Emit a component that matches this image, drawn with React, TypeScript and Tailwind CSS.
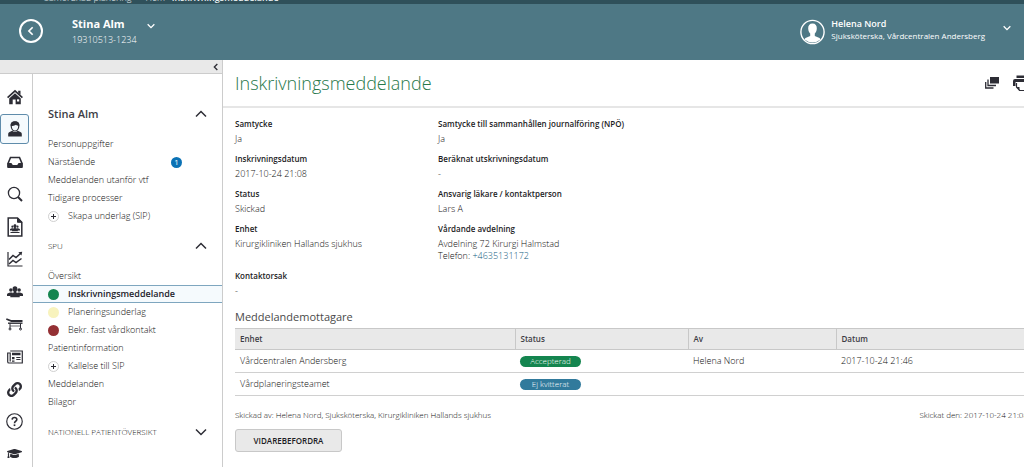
import type { ReactNode } from "react";
import { FaGraduationCap, FaLink } from "react-icons/fa";

const dark = "#2d2d35";

function Glyph({ children, size = 16 }: { children: ReactNode; size?: number }) {
  return (
    <svg width={size} height={size} viewBox="0 0 16 16" fill="none" stroke={dark} strokeWidth="1.2" aria-hidden="true">
      {children}
    </svg>
  );
}

function Chevron({ dir, size, color, width = 2 }: { dir: "up" | "down" | "left"; size: number; color: string; width?: number }) {
  const d = { up: "M1 8.500 6 3.500l5 5", down: "M1 3.500 6 8.500l5-5", left: "M8 1.500 3.500 6 8 10.500" }[dir];
  return (
    <svg width={size} height={size} viewBox="0 0 12 12" fill="none" stroke={color} strokeWidth={width} aria-hidden="true">
      <path d={d} />
    </svg>
  );
}

function People() {
  return (
    <g fill={dark} stroke="none">
      <circle cx="3.900" cy="6" r="1.800" />
      <circle cx="12.100" cy="6" r="1.800" />
      <path d="M0 12V10.500Q0 9.600 1 9.300L3 8.500H5L6 9 3.500 12ZM16 12V10.500Q16 9.600 15 9.300L13 8.500H11L10 9 12.500 12Z" />
      <path d="M8 2.200C9.600 2.200 10.500 3.300 10.400 4.900 10.300 6.200 9.800 7 9.300 7.500V8.600L12 9.900Q12.700 10.300 12.700 11.200V13.200H3.300V11.200Q3.300 10.300 4 9.900L6.700 8.600V7.500C6.200 7 5.700 6.200 5.600 4.900 5.500 3.300 6.400 2.200 8 2.200Z" />
    </g>
  );
}

const railItems: { label: string; icon: ReactNode; active?: boolean }[] = [
  {
    label: "Hem",
    icon: (
      <Glyph>
        <path d="M.6 8.600 8 1.800l7.400 6.800" strokeWidth="1.700" />
        <path fill={dark} stroke="none" d="M11.200 1.700h2.300v4l-2.300-2ZM8 4.300l5.800 5.200v5.700H8.600V10.500H5.700v4.700H2.200V9.500Z" />
        <path fill="#fff" stroke="none" d="M10 10.300h2.200v2.200H10z" />
      </Glyph>
    ),
  },
  {
    label: "Patient",
    active: true,
    icon: (
      <Glyph>
        <path d="M4.200 5C4 2.300 5.600.9 8 .9S12 2.300 11.800 5C11.700 8 9.900 10 8 10S4.300 8 4.200 5Z" />
        <path fill={dark} stroke="none" d="M3.800 5C3.200 1.800 5 .4 8 .4s4.800 1.400 4.200 4.600C10.500 4.800 9.500 4.200 9 3.700 8 4.600 5.500 5 3.800 5ZM1.200 15.600V12.800Q1.200 11.500 2.600 11L5.200 9.800Q8 12.200 10.800 9.800L13.400 11Q14.800 11.500 14.800 12.800V15.600Z" />
      </Glyph>
    ),
  },
  {
    label: "Inkorg",
    icon: (
      <Glyph>
        <path d="M1 9.500 3.500 3.500H12.500L15 9.500V12.500Q15 13.300 14.200 13.300H1.800Q1 13.300 1 12.500Z" strokeWidth="1.600" />
        <path fill={dark} stroke="none" d="M.5 9H4.500Q5.200 11 6.200 11H9.800Q10.800 11 11.500 9H15.500V13.800H.5Z" />
      </Glyph>
    ),
  },
  {
    label: "Sök",
    icon: (
      <Glyph>
        <circle cx="7" cy="7" r="5.600" strokeWidth="1.300" />
        <path d="m11 11 4 4" strokeWidth="2" />
      </Glyph>
    ),
  },
  {
    label: "Rapporter",
    icon: (
      <svg width="16" height="20" viewBox="0 0 16 20" fill="none" stroke={dark} strokeWidth="1.500" aria-hidden="true">
        <path d="M1.200 1H10.500L14.800 5.300V19H1.200Z" />
        <path fill={dark} d="M10.500 1V5.300H14.800Z" strokeWidth="1" />
        <g transform="translate(3 6) scale(.62)">
          <People />
        </g>
        <path d="M3.500 15.500H12.500" strokeWidth="1" />
      </svg>
    ),
  },
  {
    label: "Statistik",
    icon: (
      <Glyph>
        <path d="M1 1V15H15.500" />
        <path d="M2 8.500 6 4.500 9 6.500 13.500 2.500M2 13 6 9.500 9 11.500 14.500 7.500" strokeWidth="1.500" />
        <path fill={dark} stroke="none" d="M11.300 1.200 15.200.8 14.500 4.600Z" />
      </Glyph>
    ),
  },
  { label: "Grupper", icon: <Glyph><People /></Glyph> },
  {
    label: "Vårdplats",
    icon: (
      <svg width="17" height="14" viewBox="0 0 17 14" fill="none" stroke={dark} aria-hidden="true">
        <path d="M.3 2 5.500 4H16.500" strokeWidth="1.800" />
        <path d="M2 6.200H16.500" strokeWidth="1.400" />
        <path d="M4 6.500V11.500M14.500 6.500V11.500" strokeWidth="1" />
        <path d="M4 9H14.500" strokeWidth=".7" />
        <circle cx="4" cy="12" r="1" strokeWidth="1" />
        <circle cx="14.500" cy="12" r="1" strokeWidth="1" />
      </svg>
    ),
  },
  {
    label: "Nyheter",
    icon: (
      <Glyph>
        <path d="M3.200 2H15.300V14H2Q.7 14 .7 12.700V4H3.200V12.500" />
        <path fill={dark} stroke="none" d="M5 3.800H13.500V6.200H5zM5 8H7.500V10.200H5z" />
        <path d="M9.300 8.500H13.500M9.300 10.500H13.500M5 12.200H7.500" />
      </Glyph>
    ),
  },
  { label: "Länkar", icon: <FaLink size={15} color={dark} aria-hidden="true" /> },
  {
    label: "Hjälp",
    icon: (
      <Glyph size={17}>
        <circle cx="8" cy="8" r="7.300" strokeWidth="1.100" />
        <path d="M5.800 6.200Q5.900 4.300 8 4.300T10.200 6.100Q10.200 7.100 9.100 7.800T8 9.600" strokeWidth="1.500" />
        <path d="M8 10.700V12.300" strokeWidth="1.600" />
      </Glyph>
    ),
  },
  { label: "Utbildning", icon: <FaGraduationCap size={15} color={dark} aria-hidden="true" /> },
];

type Item = { text: string; mark?: "plus" | "green" | "yellow" | "red"; badge?: number; active?: boolean };

const personItems: Item[] = [
  { text: "Personuppgifter" },
  { text: "Närstående", badge: 1 },
  { text: "Meddelanden utanför vtf" },
  { text: "Tidigare processer" },
  { text: "Skapa underlag (SIP)", mark: "plus" },
];

const spuItems: Item[] = [
  { text: "Översikt" },
  { text: "Inskrivningsmeddelande", mark: "green", active: true },
  { text: "Planeringsunderlag", mark: "yellow" },
  { text: "Bekr. fast vårdkontakt", mark: "red" },
  { text: "Patientinformation" },
  { text: "Kallelse till SIP", mark: "plus" },
  { text: "Meddelanden" },
  { text: "Bilagor" },
];

const markClass = {
  plus: "border border-[#d0d0d0]",
  green: "bg-[#14854f]",
  yellow: "bg-[#f8f3bd]",
  red: "bg-[#943034]",
};

function MenuList({ items }: { items: Item[] }) {
  return (
    <ul>
      {items.map((item) => (
        <li key={item.text}>
          <a
            href="#"
            aria-current={item.active ? "page" : undefined}
            className={
              "flex h-[18px] items-center pl-[15px] " +
              (item.active ? "border-y border-[#7ea6bf] bg-[#f5fafd] font-semibold text-[#22222a]" : "")
            }
          >
            {item.mark && (
              <span className={"mr-[9px] flex size-[11px] items-center justify-center rounded-full " + markClass[item.mark]}>
                {item.mark === "plus" && (
                  <svg width="5" height="5" viewBox="0 0 5 5" stroke={dark} strokeWidth="1" aria-hidden="true">
                    <path d="M2.500 0V5M0 2.500H5" />
                  </svg>
                )}
              </span>
            )}
            {item.text}
            {item.badge && (
              <span className="mr-10 ml-auto flex size-[11px] items-center justify-center rounded-full bg-[#0b72b5] text-[8px] font-normal text-white">
                {item.badge}
              </span>
            )}
          </a>
        </li>
      ))}
    </ul>
  );
}

function Field({ label, children }: { label: string; children: ReactNode }) {
  return (
    <div>
      <dt className="text-[8px] leading-[14px] font-semibold text-[#1c1c24]">{label}</dt>
      <dd className="mt-[2px] leading-3">{children}</dd>
    </div>
  );
}

const recipients = [
  { unit: "Vårdcentralen Andersberg", status: "Accepterad", color: "bg-[#14854f]", by: "Helena Nord", date: "2017-10-24 21:46" },
  { unit: "Vårdplaneringsteamet", status: "Ej kvitterat", color: "bg-[#317a9c]", by: "", date: "" },
];

export default function App() {
  return (
    <div className="flex h-screen flex-col overflow-hidden bg-white font-['Open_Sans',sans-serif] text-[9px] leading-3 font-light whitespace-nowrap text-[#111]">
      <nav className="flex h-1 shrink-0 items-end overflow-hidden bg-[#2f505a] pl-11 text-[9px] text-[#e6eef0]" aria-label="Sökväg">
        <div className="flex h-3 items-end gap-[14px] leading-3">
          <a href="#">Samordnad planering</a>
          <span>Hem · <b className="font-semibold">Inskrivningsmeddelande</b></span>
        </div>
      </nav>
      <header className="flex h-14 shrink-0 items-center bg-[#4e7885] pr-[13px] pl-[19px] text-white">
        <button type="button" aria-label="Tillbaka" className="mb-[2px] flex size-6 items-center justify-center rounded-full border-2 border-white">
          <Chevron dir="left" size={10} color="#fff" />
        </button>
        <div className="ml-[29px] leading-4">
          <div className="text-[11px] font-bold">Stina Alm</div>
          <div>19310513-1234</div>
        </div>
        <button type="button" aria-label="Visa patient" className="mb-3 ml-[10px]">
          <Chevron dir="down" size={8} color="#fff" />
        </button>
        <svg className="ml-auto" width="25" height="26" viewBox="0 0 25 26" aria-hidden="true">
          <circle cx="12.500" cy="13" r="11.600" fill="#4e7885" stroke="#fff" strokeWidth="1.400" />
          <path fill="#fff" d="M12.500 4.500C15.500 4.500 17 6.500 16.800 9.800 16.600 12.300 15.700 13.700 14.800 14.600V17L19.500 19Q20.300 19.500 20.500 20.600 17 23.500 12.500 23.500T4.500 20.600Q4.700 19.500 5.500 19L10.200 17V14.600C9.300 13.700 8.400 12.300 8.200 9.800 8 6.500 9.500 4.500 12.500 4.500Z" />
        </svg>
        <div className="mb-1 ml-[6px] leading-3">
          <div className="font-semibold">Helena Nord</div>
          <div className="text-[8px] font-normal">Sjuksköterska, Vårdcentralen Andersberg</div>
        </div>
        <button type="button" aria-label="Visa användare" className="mb-2 ml-[18px]">
          <Chevron dir="down" size={8} color="#fff" />
        </button>
      </header>

      <div className="flex min-h-0 flex-1">
        <aside className="flex w-[223px] shrink-0 flex-col border-r border-[#ccc]">
          <div className="flex h-[14px] shrink-0 items-center justify-end border-b border-[#ccc] bg-[#e9e9e9] pr-[2px]">
            <button type="button" aria-label="Fäll ihop menyn">
              <Chevron dir="left" size={8} color={dark} />
            </button>
          </div>
          <div className="flex min-h-0 flex-1">
            <nav aria-label="Huvudmeny" className="-mb-[2px] flex w-8 shrink-0 flex-col justify-between pt-2">
              {railItems.map((item) => (
                <button
                  key={item.label}
                  type="button"
                  aria-label={item.label}
                  className={
                    "flex h-[30px] w-[29px] shrink-0 items-center justify-center rounded-[3px] " +
                    (item.active ? "border border-[#5f8cab] bg-[#f5fafd]" : "")
                  }
                >
                  {item.icon}
                </button>
              ))}
            </nav>
            <nav aria-label="Patientmeny" className="flex min-w-0 flex-1 flex-col gap-3 border-l border-[#ccc] pt-[30px]">
              <button type="button" className="flex h-[19px] items-center justify-between px-[15px] text-[11px] font-semibold text-[#3d3d45]">
                Stina Alm
                <Chevron dir="up" size={12} color={dark} width={1.5} />
              </button>
              <MenuList items={personItems} />
              <button type="button" className="flex h-[18px] items-center justify-between px-[15px] text-[8px]">
                SPU
                <Chevron dir="up" size={12} color={dark} width={1.5} />
              </button>
              <MenuList items={spuItems} />
              <button type="button" className="flex h-[18px] items-center justify-between px-[15px] text-[8px]">
                NATIONELL PATIENTÖVERSIKT
                <Chevron dir="down" size={12} color={dark} width={1.5} />
              </button>
            </nav>
          </div>
        </aside>

        <main className="min-w-0 flex-1 overflow-hidden">
          <div className="-mr-5">
            <div className="flex h-12 items-center gap-[14px] border-b-2 border-[#e6e6e6] pr-[14px] pl-3">
              <h1 className="mr-auto text-[18px] leading-6 font-light text-[#26784a]">Inskrivningsmeddelande</h1>
              <button type="button" aria-label="Öppna i nytt fönster">
                <svg width="14" height="12" viewBox="0 0 14 12" fill="none" stroke={dark} aria-hidden="true">
                  <path fill={dark} stroke="none" d="M5 0H14V6.500H5z" />
                  <path d="M3 2.500V8.500H11M.7 5V11H8.500" strokeWidth="1.300" />
                </svg>
              </button>
              <button type="button" aria-label="Skriv ut">
                <svg width="17" height="17" viewBox="0 0 17 17" fill="none" stroke={dark} aria-hidden="true">
                  <path fill={dark} stroke="none" d="M3.500.5H13.500V3H3.500zM2 4H15Q17 4 17 6V11H14.500V7H2.500V11H0V6Q0 4 2 4Z" />
                  <path d="M3.500 8V12L6.500 15.500H13.500V8" strokeWidth="1.200" />
                  <path fill={dark} stroke="none" d="M3.500 12H6.500V15.500Z" />
                </svg>
              </button>
            </div>

            <div className="pr-4 pl-3">
              <dl className="flex flex-col gap-[7px] pt-[9px]">
                <div className="grid grid-cols-[203px_1fr]">
                  <Field label="Samtycke">Ja</Field>
                  <Field label="Samtycke till sammanhållen journalföring (NPÖ)">Ja</Field>
                </div>
                <div className="grid grid-cols-[203px_1fr]">
                  <Field label="Inskrivningsdatum">2017-10-24 21:08</Field>
                  <Field label="Beräknat utskrivningsdatum">-</Field>
                </div>
                <div className="grid grid-cols-[203px_1fr]">
                  <Field label="Status">Skickad</Field>
                  <Field label="Ansvarig läkare / kontaktperson">Lars A</Field>
                </div>
                <div className="grid grid-cols-[203px_1fr]">
                  <Field label="Enhet">Kirurgikliniken Hallands sjukhus</Field>
                  <Field label="Vårdande avdelning">
                    Avdelning 72 Kirurgi Halmstad
                    <br />
                    Telefon: <a href="tel:+4635131172" className="text-[#0f5a7e]">+4635131172</a>
                  </Field>
                </div>
                <Field label="Kontaktorsak">-</Field>
              </dl>

              <h2 className="mt-3 text-[11px] leading-4 font-normal text-[#4a4a4a]">Meddelandemottagare</h2>
              <table className="mt-[3px] w-full table-fixed border-collapse text-left">
                <colgroup>
                  <col className="w-[280px]" />
                  <col className="w-[173px]" />
                  <col className="w-[148px]" />
                  <col />
                </colgroup>
                <thead>
                  <tr className="h-[21px] border-y border-[#c8c8c8] bg-[#e9e9e9] text-[8px] text-[#3d3d45]">
                    <th className="border-r border-[#c8c8c8] px-[5px] font-semibold">Enhet</th>
                    <th className="border-r border-[#c8c8c8] px-[5px] font-semibold">Status</th>
                    <th className="border-r border-[#c8c8c8] px-[5px] font-semibold">Av</th>
                    <th className="px-[5px] font-semibold">Datum</th>
                  </tr>
                </thead>
                <tbody>
                  {recipients.map((r) => (
                    <tr key={r.unit} className="h-[23px] border-b border-[#d0d0d0]">
                      <td className="px-[5px]">{r.unit}</td>
                      <td className="px-[5px]">
                        <span className={"block h-[11px] w-[61px] rounded-full text-center text-[8px] leading-[10px] text-white " + r.color}>
                          {r.status}
                        </span>
                      </td>
                      <td className="px-[5px]">{r.by}</td>
                      <td className="px-[5px]">{r.date}</td>
                    </tr>
                  ))}
                </tbody>
              </table>

              <div className="mt-[13px] flex justify-between text-[8px] leading-3">
                <span>Skickad av: Helena Nord, Sjuksköterska, Kirurgikliniken Hallands sjukhus</span>
                <span>Skickat den: 2017-10-24 21:08</span>
              </div>
              <button type="button" className="mt-2 h-[23px] w-[107px] rounded-[3px] border border-[#c8c8c8] bg-[#e9e9e9] text-[8px] font-semibold text-[#1c1c24]">
                VIDAREBEFORDRA
              </button>
            </div>
          </div>
        </main>
      </div>
    </div>
  );
}
